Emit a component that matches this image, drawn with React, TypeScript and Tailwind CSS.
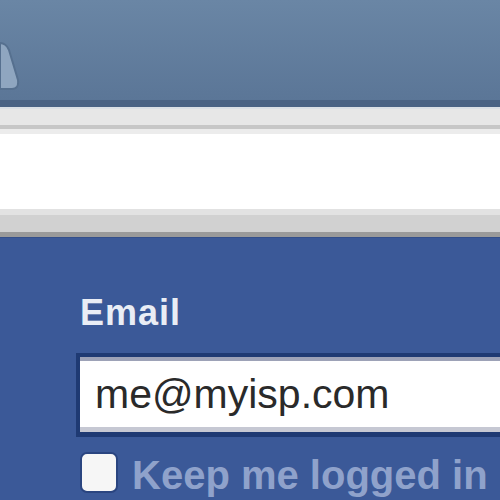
export default function App() {
  return (
    <div className="w-[500px] h-[500px] overflow-hidden flex flex-col bg-[#3b5998] font-['Liberation_Sans',Arial,sans-serif]">
      {/* top bar */}
      <div className="h-[100px] shrink-0 bg-gradient-to-b from-[#6a86a5] to-[#5b7697] flex items-start">
        <svg width="24" height="100" viewBox="0 0 24 100" className="shrink-0">
          <path d="M0 43 Q6 43 9 50 L18 80 Q19 89 12 89 L0 89 Z" fill="#8fa6c0" stroke="#56708f" strokeWidth="2" />
        </svg>
      </div>
      <div className="h-[7px] shrink-0 bg-[#4a6384]" />
      <div className="h-[2px] shrink-0 bg-[#dbe0e6]" />
      <div className="h-[16px] shrink-0 bg-[#e7e7e7]" />
      <div className="h-[4px] shrink-0 bg-[#c7c7c7]" />
      <div className="h-[5px] shrink-0 bg-[#ececec]" />
      <div className="h-[75px] shrink-0 bg-white" />
      <div className="h-[6px] shrink-0 bg-[#e2e2e2]" />
      <div className="h-[17px] shrink-0 bg-[#d1d1d1]" />
      <div className="h-[5px] shrink-0 bg-[#9a9a9a]" />
      <div className="h-[1px] shrink-0 bg-[#344f8a]" />

      {/* login form */}
      <div className="flex flex-col pl-[76px] pt-[57px]">
        <label className="pl-[4px] text-[36px] leading-none font-bold tracking-[1px] text-[#e9edf5]">Email</label>
        <div className="mt-[22px] border-t-4 border-l-4 border-b-[5px] border-[#1f3a73]">
          <div className="bg-white border-t-4 border-b-[5px] border-t-[#9da2b7] border-b-[#c6c8d3] pl-[15px] pt-[13px] pb-[12px] text-[41px] leading-none text-[#2a2a2a] whitespace-nowrap">
            me@myisp.com
          </div>
        </div>
        <div className="mt-[15px] pl-[4px] flex items-start">
          <div className="w-[38px] h-[41px] shrink-0 rounded-[7px] bg-[#f6f6f6] border-2 border-[#2a4580]" />
          <span className="ml-[14px] mt-[3px] text-[40px] leading-none font-bold text-[#8fa2cb] whitespace-nowrap">Keep me logged in</span>
        </div>
      </div>
    </div>
  );
}
